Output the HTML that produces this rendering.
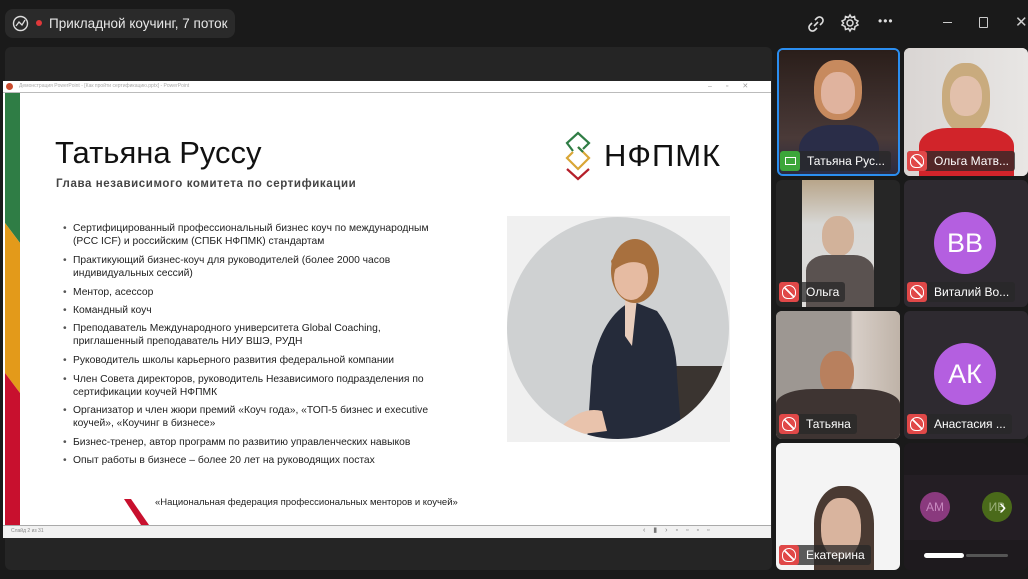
<!DOCTYPE html>
<html><head><meta charset="utf-8"><style>
*{margin:0;padding:0;box-sizing:border-box}
body{width:1028px;height:579px;background:#1a1a1a;font-family:"Liberation Sans","DejaVu Sans",sans-serif;position:relative;overflow:hidden;color:#fff}
.abs{position:absolute}
.pill{left:5px;top:9px;width:230px;height:29px;background:#2a2a2a;border-radius:8px}
.stage{left:5px;top:47px;width:767px;height:523px;background:#252525;border-radius:6px}
.win{left:3px;top:81px;width:768px;height:457px;background:#fff}
.slide{font-family:"Liberation Sans","DejaVu Sans",sans-serif;color:#333}
ul{list-style:none}
li{position:absolute;left:70px;font-size:10.3px;line-height:13px;color:#222;width:380px}
li:before{content:"•";position:absolute;left:-10px;color:#555}
.tile{position:absolute;border-radius:6px;overflow:hidden;background:#2e2a30}
.lab{position:absolute;left:3px;bottom:5px;height:20px;display:flex;align-items:center;background:rgba(40,40,40,.75);border-radius:3px;font-size:12px;color:#fff;padding-right:6px}
.mic{width:20px;height:20px;background:#e04848;border-radius:3px;margin-right:7px;display:flex;align-items:center;justify-content:center}
.mic:after{content:"";width:12px;height:12px;background:linear-gradient(45deg,transparent 45%,#fff 45%,#fff 55%,transparent 55%);border:1.3px solid #fff;border-radius:50% 50% 40% 40%}
.mic.scr:after{display:none}
.av{position:absolute;width:62px;height:62px;border-radius:50%;background:#b45fe0;color:#fff;font-size:27px;display:flex;align-items:center;justify-content:center}
</style></head><body>
<div class="abs pill"></div>
<svg class="abs" style="left:12px;top:15px" width="17" height="17" viewBox="0 0 17 17"><circle cx="8.5" cy="8.5" r="7" fill="none" stroke="#ddd" stroke-width="1.4"/><path d="M4 11 L7 7 L10 10 L13 5" fill="none" stroke="#ddd" stroke-width="1.3"/></svg>
<div class="abs" style="left:36px;top:20px;width:6px;height:6px;border-radius:50%;background:#e0383a"></div>
<div class="abs" style="left:49px;top:16px;font-size:13.5px;color:#e8e8e8">Прикладной коучинг, 7 поток</div>
<svg class="abs" style="left:806px;top:14px" width="20" height="20" viewBox="0 0 20 20" fill="none" stroke="#ddd" stroke-width="1.6"><path d="M8 12 L12 8"/><path d="M9 6 L11 4 A3.5 3.5 0 0 1 16 9 L14 11"/><path d="M11 14 L9 16 A3.5 3.5 0 0 1 4 11 L6 9"/></svg>
<svg class="abs" style="left:840px;top:13px" width="20" height="20" viewBox="0 0 20 20" fill="none" stroke="#ddd" stroke-width="1.5"><circle cx="10" cy="10" r="3"/><path d="M10 2 L11.5 4.5 L14.5 3.5 L15 6.5 L18 8 L16.5 10 L18 12 L15 13.5 L14.5 16.5 L11.5 15.5 L10 18 L8.5 15.5 L5.5 16.5 L5 13.5 L2 12 L3.5 10 L2 8 L5 6.5 L5.5 3.5 L8.5 4.5 Z"/></svg>
<div class="abs" style="left:878px;top:14px;font-size:12px;color:#ddd;letter-spacing:1px">•••</div>
<div class="abs" style="left:943px;top:22px;width:9px;height:1px;background:#ccc"></div>
<div class="abs" style="left:979px;top:17px;width:9px;height:11px;border:1.3px solid #ccc;border-radius:1px"></div>
<div class="abs" style="left:1015px;top:13px;font-size:15px;color:#ccc">✕</div>

<div class="abs stage"></div>
<div class="abs win slide">
  <div class="abs" style="left:0;top:0;width:768px;height:12px;background:#fff;border-bottom:1px solid #bbb"></div>
  <div class="abs" style="left:3px;top:2px;width:7px;height:7px;border-radius:50%;background:#c94a2c"></div>
  <div class="abs" style="left:16px;top:2px;font-size:5px;color:#aaa">Демонстрация PowerPoint - [Как пройти сертификацию.pptx] - PowerPoint</div>
  <div class="abs" style="left:705px;top:1px;font-size:7px;color:#999;letter-spacing:14px">–▫✕</div>
  <svg class="abs" style="left:2px;top:12px" width="20" height="432" viewBox="0 0 20 432"><polygon points="0,0 15,0 15,150 0,130" fill="#2f7d45"/><polygon points="0,130 15,150 15,300 0,280" fill="#e39a1a"/><polygon points="0,280 15,300 15,432 0,432" fill="#c8102e"/></svg>
  <div class="abs" style="left:52px;top:54px;font-size:31px;color:#111">Татьяна Руссу</div>
  <div class="abs" style="left:53px;top:97px;font-size:11.5px;color:#444;letter-spacing:.6px;font-weight:bold">Глава независимого комитета по сертификации</div>
  <ul>
  <li style="top:141px">Сертифицированный профессиональный бизнес коуч по международным (PCC ICF) и российским (СПБК НФПМК) стандартам</li>
  <li style="top:173px">Практикующий бизнес-коуч для руководителей (более 2000 часов индивидуальных сессий)</li>
  <li style="top:205px">Ментор, асессор</li>
  <li style="top:223px">Командный коуч</li>
  <li style="top:241px">Преподаватель Международного университета Global Coaching, приглашенный преподаватель НИУ ВШЭ, РУДН</li>
  <li style="top:273px">Руководитель школы карьерного развития федеральной компании</li>
  <li style="top:292px">Член Совета директоров, руководитель Независимого подразделения по сертификации коучей НФПМК</li>
  <li style="top:323px">Организатор и член жюри премий «Коуч года», «ТОП-5 бизнес и executive коучей», «Коучинг в бизнесе»</li>
  <li style="top:355px">Бизнес-тренер, автор программ по развитию управленческих навыков</li>
  <li style="top:373px">Опыт работы в бизнесе – более 20 лет на руководящих постах</li>
  </ul>
  <svg class="abs" style="left:118px;top:418px" width="40" height="26"><path d="M3 0 L20 26 L28 26 L10 0Z" fill="#c8102e"/></svg>
  <div class="abs" style="left:152px;top:416px;font-size:9.5px;color:#222">«Национальная федерация профессиональных менторов и коучей»</div>
  <svg class="abs" style="left:558px;top:50px" width="36" height="60" viewBox="0 0 36 60" fill="none" stroke-width="2.2"><path d="M12 20 L6 12 L17 2 L28 12 L22 18" stroke="#2f7d45"/><path d="M17 16 L28 27 L17 38 L6 27 L12 21" stroke="#d9a636"/><path d="M6 38 L17 48 L28 38" stroke="#b51f2a"/><path d="M17 16 L22 21" stroke="#2f7d45"/></svg>
  <div class="abs" style="left:601px;top:57px;font-size:31px;color:#111;letter-spacing:1px">НФПМК</div>
  <div class="abs" style="left:504px;top:135px;width:223px;height:226px;background:#f0f0f0"></div>
  <svg class="abs" style="left:504px;top:135px" width="223" height="226" viewBox="0 0 223 226">
    <defs><clipPath id="c"><circle cx="111" cy="112" r="111"/></clipPath></defs>
    <circle cx="111" cy="112" r="111" fill="#cfd1d2"/>
    <g clip-path="url(#c)">
      <rect x="160" y="150" width="70" height="80" fill="#3a3430"/>
      <path d="M80 226 L85 150 Q95 100 125 85 L150 95 Q170 120 170 160 L175 226Z" fill="#252b3a"/>
      <path d="M55 210 Q75 190 95 195 L100 215 L60 220Z" fill="#e9c3ac"/>
      <path d="M118 85 L130 82 L125 130 L118 120Z" fill="#e8cdbc"/>
      <ellipse cx="128" cy="55" rx="24" ry="32" fill="#a8703e"/>
      <ellipse cx="124" cy="62" rx="17" ry="22" fill="#e6bba2"/>
      <path d="M104 45 Q120 20 148 38 L150 60 Q130 35 106 55Z" fill="#a8703e"/>
    </g>
  </svg>
  <div class="abs" style="left:0;top:444px;width:768px;height:13px;background:#f1f1f1;border-top:1px solid #aaa"></div>
  <div class="abs" style="left:8px;top:447px;font-size:5px;color:#888">Слайд 2 из 31</div>
  <div class="abs" style="left:640px;top:445px;font-size:7px;color:#777;letter-spacing:8px">‹▮›▫▫▫▫</div>
</div>

<div class="tile" style="left:777px;top:48px;width:123px;height:128px;background:#3a2a22;border:2px solid #2b8ef0">
  <div class="abs" style="left:0;top:0;width:120px;height:126px;background:linear-gradient(180deg,#2a1e1a,#4a3a38 70%,#2a2a40)"></div>
  <div class="abs" style="left:35px;top:10px;width:48px;height:60px;border-radius:45%;background:#c78a5e"></div>
  <div class="abs" style="left:42px;top:22px;width:34px;height:42px;border-radius:45%;background:#e0b39e"></div>
  <div class="abs" style="left:20px;top:75px;width:80px;height:60px;border-radius:40% 40% 0 0;background:#2a2d48"></div>
  <div class="lab" style="left:1px;bottom:3px"><div class="mic scr" style="background:#3ca63a"><div style="width:11px;height:8px;border:1.5px solid #fff"></div></div>Татьяна Рус...</div>
</div>
<div class="tile" style="left:904px;top:48px;width:124px;height:128px;background:#d8d4d0">
  <div class="abs" style="left:0;top:0;width:124px;height:128px;background:linear-gradient(90deg,#d9d5d3,#e8e6e4)"></div>
  <div class="abs" style="left:38px;top:15px;width:48px;height:70px;border-radius:45%;background:#c9ab7e"></div>
  <div class="abs" style="left:46px;top:28px;width:32px;height:40px;border-radius:45%;background:#e2c0ab"></div>
  <div class="abs" style="left:15px;top:80px;width:95px;height:60px;border-radius:30% 30% 0 0;background:#d1242a"></div>
  <div class="lab"><div class="mic"></div>Ольга Матв...</div>
</div>
<div class="tile" style="left:776px;top:180px;width:124px;height:127px;background:#262626">
  <div class="abs" style="left:26px;top:0;width:72px;height:127px;background:linear-gradient(180deg,#b8a58a,#d8d8d6 35%,#dedcda)"></div>
  <div class="abs" style="left:46px;top:36px;width:32px;height:40px;border-radius:45%;background:#d2b29a"></div>
  <div class="abs" style="left:30px;top:75px;width:68px;height:52px;border-radius:30% 30% 0 0;background:#5a5250"></div>
  <div class="lab"><div class="mic"></div>Ольга</div>
</div>
<div class="tile" style="left:904px;top:180px;width:124px;height:127px">
  <div class="av" style="left:30px;top:32px">ВВ</div>
  <div class="lab"><div class="mic"></div>Виталий Во...</div>
</div>
<div class="tile" style="left:776px;top:311px;width:124px;height:128px;background:#a9a19c">
  <div class="abs" style="left:0;top:0;width:124px;height:128px;background:linear-gradient(90deg,#9d9792 60%,#d8cfc8 62%,#bfb3a8)"></div>
  <div class="abs" style="left:44px;top:40px;width:34px;height:44px;border-radius:45%;background:#b8805e"></div>
  <div class="abs" style="left:0;top:78px;width:124px;height:50px;border-radius:30% 30% 0 0;background:#3e3432"></div>
  <div class="lab"><div class="mic"></div>Татьяна</div>
</div>
<div class="tile" style="left:904px;top:311px;width:124px;height:128px">
  <div class="av" style="left:30px;top:32px">АК</div>
  <div class="lab"><div class="mic"></div>Анастасия ...</div>
</div>
<div class="tile" style="left:776px;top:443px;width:124px;height:127px;background:#f4f4f4">
  <div class="abs" style="left:38px;top:43px;width:60px;height:84px;border-radius:45% 45% 0 0;background:#4a3a32"></div>
  <div class="abs" style="left:45px;top:55px;width:40px;height:60px;border-radius:45%;background:#d9b49e"></div>
  <div class="lab"><div class="mic"></div>Екатерина</div>
</div>
<div class="tile" style="left:904px;top:443px;width:124px;height:127px;background:#1e1a1e">
  <div class="abs" style="left:0;top:32px;width:124px;height:65px;background:#241e24"></div>
  <div class="abs" style="left:16px;top:49px;width:30px;height:30px;border-radius:50%;background:#8a3a7e;color:#c88ac0;font-size:12px;display:flex;align-items:center;justify-content:center">АМ</div>
  <div class="abs" style="left:78px;top:49px;width:30px;height:30px;border-radius:50%;background:#4a6a1a;color:#9ab07a;font-size:12px;display:flex;align-items:center;justify-content:center">ИВ</div>
  <div class="abs" style="left:95px;top:51px;font-size:22px;color:#fff">›</div>
  <div class="abs" style="left:20px;top:110px;width:40px;height:5px;border-radius:3px;background:#fff"></div>
  <div class="abs" style="left:62px;top:111px;width:42px;height:3px;border-radius:2px;background:#555"></div>
</div>
</body></html>
